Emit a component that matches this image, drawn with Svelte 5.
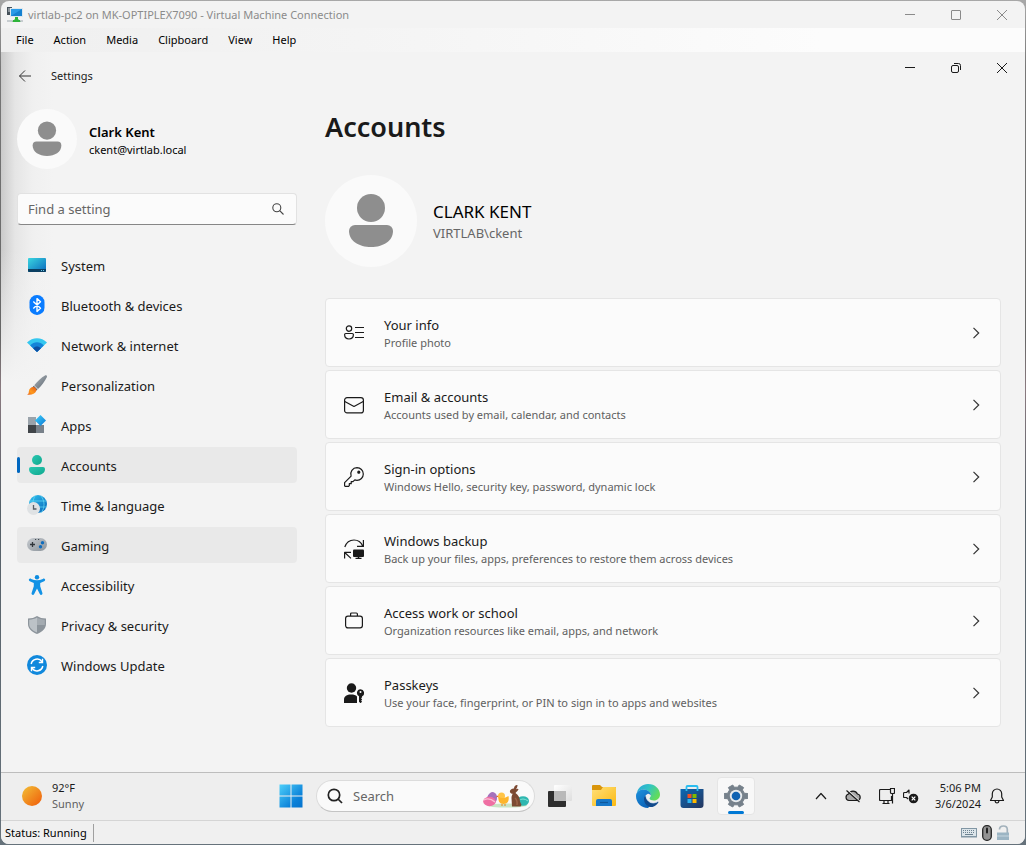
<script>
  const nav = [
    { icon: 'system', label: 'System' },
    { icon: 'bluetooth', label: 'Bluetooth & devices' },
    { icon: 'network', label: 'Network & internet' },
    { icon: 'brush', label: 'Personalization' },
    { icon: 'apps', label: 'Apps' },
    { icon: 'accounts', label: 'Accounts', current: true },
    { icon: 'time', label: 'Time & language' },
    { icon: 'gaming', label: 'Gaming', hovered: true },
    { icon: 'accessibility', label: 'Accessibility' },
    { icon: 'shield', label: 'Privacy & security' },
    { icon: 'update', label: 'Windows Update' }
  ];

  const cards = [
    { icon: 'info', title: 'Your info', text: 'Profile photo' },
    { icon: 'mail', title: 'Email & accounts', text: 'Accounts used by email, calendar, and contacts' },
    { icon: 'key', title: 'Sign-in options', text: 'Windows Hello, security key, password, dynamic lock' },
    { icon: 'backup', title: 'Windows backup', text: 'Back up your files, apps, preferences to restore them across devices' },
    { icon: 'work', title: 'Access work or school', text: 'Organization resources like email, apps, and network' },
    { icon: 'passkey', title: 'Passkeys', text: 'Use your face, fingerprint, or PIN to sign in to apps and websites' }
  ];

  const menus = ['File', 'Action', 'Media', 'Clipboard', 'View', 'Help'];
  let query = $state('');
  let taskQuery = $state('');
</script>

{#snippet navIcon(name)}
  <svg class="i20" viewBox="0 0 20 20" aria-hidden="true">
    {#if name === 'system'}
      <defs>
        <linearGradient id="sys" x1="0" y1="0" x2="1" y2="1"><stop offset="0" stop-color="#3ad6e0" /><stop offset="1" stop-color="#0a68bd" /></linearGradient>
      </defs>
      <rect x="1" y="3" width="18" height="14" rx="1" fill="url(#sys)" />
      <path d="M1 14h18v2a1 1 0 0 1-1 1H2a1 1 0 0 1-1-1z" fill="#0b3f62" />
      <path d="M14 15h1v1h-1zM16 15h1v1h-1z" fill="#6cc8ec" />
    {:else if name === 'bluetooth'}
      <rect x="2.5" y="0" width="15" height="20" rx="7.3" fill="#0a7cff" />
      <path d="M6.3 6.6l7.2 6.6L10 16.4V3.6l3.5 3.2-7.2 6.6" fill="none" stroke="#fff" stroke-width="1.4" stroke-linejoin="round" />
    {:else if name === 'network'}
      <path d="M0 7.6C5.5 1.8 14.500 1.800 20 7.600L10 17z" fill="#35c7ef" />
      <path d="M3.200 10.600C7.200 6.200 12.800 6.200 16.800 10.600L10 17z" fill="#1583d8" />
      <path d="M6.200 13.400C8.400 11 11.600 11 13.800 13.400L10 17z" fill="#0d4fa3" />
    {:else if name === 'brush'}
      <defs>
        <linearGradient id="br" x1="0" y1="0" x2="1" y2="1"><stop offset="0" stop-color="#b0b7bd" /><stop offset="1" stop-color="#5b656f" /></linearGradient>
        <linearGradient id="bt" x1="1" y1="0" x2="0" y2="1"><stop offset="0" stop-color="#e2591b" /><stop offset=".6" stop-color="#ff9a1c" /><stop offset="1" stop-color="#e8601b" /></linearGradient>
      </defs>
      <path d="M18 .4c1.200-.7 2.500.5 1.800 1.800-1.900 4-5.400 8.800-8.800 11.800L7.200 10.300C10.300 6.500 14.400 2.400 18 .4z" fill="url(#br)" />
      <path d="M6.800 10.800l3.700 3.700-1.200 1-3.600-3.600z" fill="#59616a" />
      <path d="M5.600 12c2.300-.5 4.400 1.600 3.700 3.700C8.300 19 3.800 20.200 0 19.400c2-.7 1.600-1.800 1.900-3.500.3-1.900 1.700-3.500 3.700-3.900z" fill="url(#bt)" />
    {:else if name === 'apps'}
      <defs>
        <linearGradient id="ap" x1="0" y1="0" x2="1" y2="1"><stop offset="0" stop-color="#3ed0fa" /><stop offset="1" stop-color="#0a78d4" /></linearGradient>
      </defs>
      <rect x="1" y="2" width="8" height="8" fill="#9aa3ab" />
      <rect x="1" y="10" width="8" height="8" fill="#404549" />
      <rect x="9" y="10" width="8" height="8" fill="#78818a" />
      <path d="M13.500 0L19 5.500 13.500 11 8 5.500z" fill="url(#ap)" />
    {:else if name === 'accounts'}
      <defs>
        <linearGradient id="ac" x1="0" y1="0" x2="1" y2="1"><stop offset="0" stop-color="#2bc8b2" /><stop offset="1" stop-color="#0fa88e" /></linearGradient>
      </defs>
      <circle cx="10" cy="5" r="5" fill="url(#ac)" />
      <path d="M4 12h12a2 2 0 0 1 2 2c0 4-3.600 6-8 6s-8-2-8-6a2 2 0 0 1 2-2z" fill="url(#ac)" />
    {:else if name === 'time'}
      <defs>
        <linearGradient id="gl" x1="0" y1="0" x2="1" y2="1"><stop offset="0" stop-color="#31c3ef" /><stop offset="1" stop-color="#0865b8" /></linearGradient>
      </defs>
      <circle cx="11" cy="9" r="9" fill="url(#gl)" />
      <path d="M2.500 6h17M3 12h17M8 1C5 6 5 12 9 18M14 1c4 5 4 12 0 17" fill="none" stroke="#6adff8" stroke-width=".9" opacity=".75" />
      <circle cx="6.500" cy="13.500" r="6.500" fill="#dfe2e4" />
      <path d="M6.500 10v4h3" fill="none" stroke="#555d65" stroke-width="1.300" />
    {:else if name === 'gaming'}
      <defs>
        <linearGradient id="ga" x1="0" y1="0" x2="1" y2="1"><stop offset="0" stop-color="#c6cacf" /><stop offset="1" stop-color="#8c949b" /></linearGradient>
      </defs>
      <rect x="0" y="3" width="20" height="13" rx="6.500" fill="url(#ga)" />
      <path d="M5.500 7v5M3 9.500h5" stroke="#30363b" stroke-width="1.300" />
      <circle cx="15.500" cy="7.700" r="1.700" fill="#0f6cbd" /><circle cx="13.500" cy="11.700" r="1.700" fill="#0f6cbd" />
      <path d="M8 4.500h1.200M11 4.500h1.200" stroke="#444b51" stroke-width="1" />
    {:else if name === 'accessibility'}
      <circle cx="10" cy="2.200" r="2.200" fill="#0d8ce0" />
      <path d="M2 4.300c.5-1 1.500-.8 2.200-.4 3.800 1.700 7.800 1.700 11.600 0 .7-.4 1.700-.6 2.200.4.400 1-.2 1.600-.8 1.900L13.200 8v3.200l2.200 6.900c.5 1.900-1.900 2.600-2.600.9L10 13.500 7.200 19c-.7 1.700-3.100 1-2.600-.9l2.200-6.900V8L2.800 6.200C2.200 5.900 1.600 5.300 2 4.300z" fill="#1292e5" />
    {:else if name === 'shield'}
      <path d="M10 1c2.500 1.700 5.500 2.500 9 2.500V9c0 4.700-4 8-9 10-5-2-9-5.300-9-10V3.500C4.500 3.500 7.500 2.700 10 1z" fill="#8c949b" />
      <path d="M10 2.500V17.500C5.600 15.600 2.200 12.900 2.200 9V4.700C5 4.600 7.700 4 10 2.500z" fill="#bcc2c7" />
      <path d="M10 2.500c2.300 1.500 5 2.100 7.800 2.200V10H10z" fill="#a4abb1" />
    {:else}
      <circle cx="10" cy="10" r="10" fill="#1088dc" />
      <path d="M4.200 9A6 6 0 0 1 15 6.700M15.800 11A6 6 0 0 1 5 13.300" fill="none" stroke="#fff" stroke-width="1.500" />
      <path d="M15.500 3.800v3.700h-3.700M4.500 16.200v-3.700h3.700" fill="none" stroke="#fff" stroke-width="1.400" />
    {/if}
  </svg>
{/snippet}

{#snippet cardIcon(name)}
  <svg class="i20 line" viewBox="0 0 20 20" aria-hidden="true">
    {#if name === 'info'}
      <circle cx="5" cy="5.600" r="2.700" />
      <path d="M1.800 10.500h6.400c.8 0 1.200.5 1.200 1.100 0 2.700-1.700 4.400-4.400 4.400S.6 14.300.6 11.600c0-.6.400-1.100 1.200-1.100zM11 4.500h9M11 9.500h9M11 14.500h9" />
    {:else if name === 'mail'}
      <rect x=".6" y="2.600" width="18.800" height="15.300" rx="2.500" />
      <path d="M.8 6.500L10 11.500l9.200-5" />
    {:else if name === 'key'}
      <path d="M13 .7a6.300 6.300 0 0 1 0 12.600c-.8 0-1.500-.1-2.200-.4L9 14.700H7.200v2H5.300v2l-.7.700H1.200l-.6-.6v-3.200l6.500-6.500A6.300 6.300 0 0 1 13 .7z" />
      <circle cx="14.800" cy="5.200" r="1" fill="#1a1a1a" />
    {:else if name === 'backup'}
      <path d="M.8 8C2.500 3 6 1 10 1c4 0 7 2 8.700 6M19.400 1v6.400H13M.6 19.500V13.400H7M1 13.800l6 5.600" />
      <rect x="9" y="10.500" width="11" height="7.500" rx="1" fill="#1a1a1a" stroke="none" />
      <path d="M14.500 18v2M11.500 19.500h6" stroke-width="1.500" />
    {:else if name === 'work'}
      <rect x="1.600" y="5.100" width="16.800" height="11.800" rx="2.300" />
      <path d="M6.600 5V3a1 1 0 0 1 1-1h4.800a1 1 0 0 1 1 1v2" />
    {:else}
      <g fill="#1a1a1a" stroke="none">
        <circle cx="7.500" cy="5" r="4.700" />
        <path d="M0 20v-3.500C0 13 3 11.500 7 11.500c3 0 4.600.6 6 2V20z" />
        <path fill-rule="evenodd" d="M16.500 6.200a3.700 3.700 0 0 1 1.600 7v1.100l-1 1 1 1.200-1 1.200 1 1-1.600 1.500-1.500-1.500v-5.500a3.700 3.700 0 0 1 1.500-7zm0 1.700a1 1 0 1 0 0 2 1 1 0 0 0 0-2z" />
      </g>
    {/if}
  </svg>
{/snippet}

{#snippet person()}
  <svg viewBox="0 0 92 92" aria-hidden="true">
    <circle cx="46" cy="33" r="14" fill="#8e8e8e" />
    <path d="M30 50h32a6 6 0 0 1 6 6c0 10-10 16-22 16s-22-6-22-16a6 6 0 0 1 6-6z" fill="#8e8e8e" />
  </svg>
{/snippet}

{#snippet windowButtons(restored)}
  <div class="controls" class:inner={restored}>
    <button aria-label="Minimize"><svg viewBox="0 0 12 12"><path d="M1 5.500h10" /></svg></button>
    <button aria-label={restored ? 'Restore' : 'Maximize'}>
      <svg viewBox="0 0 12 12">
        {#if restored}
          <rect x="1.500" y="3.500" width="7" height="7" rx="1.500" /><path d="M4 1.500h4.500a2 2 0 0 1 2 2V8" />
        {:else}
          <rect x="1.500" y="1.500" width="9" height="9" rx=".5" />
        {/if}
      </svg>
    </button>
    <button aria-label="Close"><svg viewBox="0 0 12 12"><path d="M1 1l10 10M11 1L1 11" /></svg></button>
  </div>
{/snippet}

<div class="desktop">
  <div class="vm">
    <header class="titlebar">
      <svg class="vmicon" viewBox="0 0 16 16" aria-hidden="true">
        <rect x="0" y="0" width="5" height="8" fill="#46515a" /><path d="M1 2h2M1 4h2" stroke="#cfd6da" />
        <rect x="3" y="1" width="13" height="9" fill="#dce7ee" /><rect x="4" y="2" width="11" height="7" fill="#2a9be8" /><path d="M4 9l11-7v7z" fill="#1681d0" />
        <path d="M8 10h3v2l3 3h-9l3-3z" fill="#2eb43a" /><path d="M0 14h16" stroke="#9ba6ad" /><path d="M6 14h7" stroke="#2eb43a" stroke-width="2" />
      </svg>
      <span>virtlab-pc2 on MK-OPTIPLEX7090 - Virtual Machine Connection</span>
      {@render windowButtons(false)}
    </header>

    <nav class="menubar" aria-label="Menu">
      {#each menus as m}<button>{m}</button>{/each}
    </nav>

    <div class="settings">
      <div class="appbar">
        <button class="back" aria-label="Back">
          <svg viewBox="0 0 14 14"><path d="M13 7H1.500M7 1.500L1.500 7 7 12.500" /></svg>
        </button>
        <span>Settings</span>
        {@render windowButtons(true)}
      </div>

      <div class="columns">
        <aside>
          <div class="user">
            <div class="avatar small">{@render person()}</div>
            <div class="who">
              <strong>Clark Kent</strong>
              <span>ckent@virtlab.local</span>
            </div>
          </div>
          <label class="find">
            <input type="text" placeholder="Find a setting" aria-label="Find a setting" bind:value={query} />
            <svg viewBox="0 0 12 12" aria-hidden="true"><circle cx="4.800" cy="4.800" r="4" /><path d="M7.700 7.700L11.500 11.500" /></svg>
          </label>
          <nav class="list" aria-label="Settings">
            {#each nav as item}
              <a href="#{item.icon}" class:current={item.current} class:hovered={item.hovered} aria-current={item.current ? 'page' : undefined}>
                {@render navIcon(item.icon)}<span>{item.label}</span>
              </a>
            {/each}
          </nav>
        </aside>

        <main>
          <h1>Accounts</h1>
          <div class="profile">
            <div class="avatar">{@render person()}</div>
            <div>
              <h2>CLARK KENT</h2>
              <p>VIRTLAB\ckent</p>
            </div>
          </div>
          <div class="cards">
            {#each cards as card}
              <button class="card">
                {@render cardIcon(card.icon)}
                <span class="words">
                  <span class="title">{card.title}</span>
                  <span class="text">{card.text}</span>
                </span>
                <svg class="chev" viewBox="0 0 12 12" aria-hidden="true"><path d="M3.500 .8L8.700 6 3.500 11.200" /></svg>
              </button>
            {/each}
          </div>
        </main>
      </div>
    </div>

    <div class="taskbar">
      <button class="weather">
        <svg viewBox="0 0 20 20" aria-hidden="true">
          <defs><linearGradient id="sun" x1="0" y1="0" x2="1" y2="1"><stop offset="0" stop-color="#f2c037" /><stop offset="1" stop-color="#f05a09" /></linearGradient></defs>
          <circle cx="10" cy="10" r="10" fill="url(#sun)" />
        </svg>
        <span><span>92°F</span><span class="muted">Sunny</span></span>
      </button>

      <div class="pins">
        <button aria-label="Start">
          <svg viewBox="0 0 24 24">
            <defs><linearGradient id="win" x1="0" y1="0" x2="24" y2="24" gradientUnits="userSpaceOnUse"><stop offset="0" stop-color="#50d2fb" /><stop offset=".7" stop-color="#0a80d8" /><stop offset="1" stop-color="#0471cc" /></linearGradient></defs>
            <path d="M.5 .5H11.500V11.500H.5zM12.500 .5h11v11h-11zM.5 12.500h11v11H.5zM12.500 12.500h11v11h-11z" fill="url(#win)" />
          </svg>
        </button>
        <label class="tasksearch">
          <svg class="mag" viewBox="0 0 16 16" aria-hidden="true"><circle cx="7" cy="7" r="5.700" /><path d="M11 11l4 4" /></svg>
          <input type="text" placeholder="Search" aria-label="Search" bind:value={taskQuery} />
          <svg class="easter" viewBox="0 0 46 24" aria-hidden="true">
            <ellipse cx="24" cy="21.500" rx="20" ry="2" fill="#c9e3c4" />
            <ellipse cx="9" cy="14.500" rx="5" ry="6.500" fill="#a672bc" transform="rotate(15 9 14.500)" />
            <ellipse cx="6.500" cy="17.500" rx="6.300" ry="4.700" fill="#ef6fa3" /><path d="M1 16q5-3 11 2" stroke="#f9c0d6" fill="none" stroke-width="1.400" />
            <circle cx="18.500" cy="12" r="3.500" fill="#ffc447" /><path d="M15.500 13c3 2 7 1 10-1 1 5-1 8-5 8s-5.500-3-5-7z" fill="#fdb52c" /><path d="M15 11.500l-2 1 2.200.7z" fill="#ed6a18" /><path d="M19 20v2M22 20v2" stroke="#e6821c" />
            <ellipse cx="40" cy="17" rx="6" ry="4.800" fill="#2fb7b0" /><path d="M35 17q5-4 10 0" stroke="#7fe0d4" fill="none" />
            <path d="M27 8c-.5-2 2-3.500 4-3.500C31 2 33 .5 34.500 1c0 1.500-.5 3-1.500 4.200 1-.7 2.300-.8 2.500 0-.5 1.500-2 2.300-3 3.800 3 2 4.500 5 4.500 8.500l1.500 3.500-1 1.500H29l-.5-8.500c0-2 .8-3.300 1.200-4.200C28.500 9.800 27.200 9.200 27 8z" fill="#7c4a33" />
            <path d="M32 14c2 2 2.500 4 2 7" stroke="#9b6347" fill="none" stroke-width="1.500" />
          </svg>
        </label>
        <button aria-label="Task view">
          <svg viewBox="0 0 24 24">
            <defs><linearGradient id="tv" x1="0" y1="0" x2="1" y2="1"><stop offset="0" stop-color="#ffffff" /><stop offset="1" stop-color="#dedede" /></linearGradient></defs>
            <rect x="0" y="7" width="18" height="16" rx="1" fill="#2e2e2e" /><rect x="6" y="1" width="18" height="16" rx="1" fill="url(#tv)" /><rect x="6" y="7" width="12" height="10" fill="#b9b9b9" />
          </svg>
        </button>
        <button aria-label="File Explorer">
          <svg viewBox="0 0 24 24">
            <defs><linearGradient id="fe" x1="0" y1="0" x2="1" y2="1"><stop offset="0" stop-color="#ffe07a" /><stop offset="1" stop-color="#fbb912" /></linearGradient></defs>
            <path d="M0 2a1 1 0 0 1 1-1h7l2 2h13a1 1 0 0 1 1 1v6H0z" fill="#d9950b" /><path d="M0 6h9l2-3h12a1 1 0 0 1 1 1v17a1 1 0 0 1-1 1H1a1 1 0 0 1-1-1z" fill="url(#fe)" />
            <path d="M4 22v-5a2 2 0 0 1 2-2h12a2 2 0 0 1 2 2v5z" fill="#1677c9" /><path d="M8 18.500h8" stroke="#0d579c" stroke-width="1.200" />
          </svg>
        </button>
        <button aria-label="Microsoft Edge">
          <svg viewBox="0 0 24 24">
            <defs>
              <linearGradient id="e1" x1="0" y1="0" x2="1" y2=".5"><stop offset="0" stop-color="#2aa4dc" /><stop offset=".5" stop-color="#31c4c4" /><stop offset="1" stop-color="#62dc5a" /></linearGradient>
              <linearGradient id="e2" x1="0" y1="0" x2=".6" y2="1"><stop offset="0" stop-color="#1d92dd" /><stop offset="1" stop-color="#0b63b8" /></linearGradient>
            </defs>
            <path d="M.8 9C2 3.600 6.500 0 12 0c7 0 12 5 12 10.500 0 3.500-2.700 6-6 6-2.500 0-4.500-.8-4.500-2 0-.7 1.300-1.300 1.300-3C14.800 8 11 5.500 7.500 5.500 4.600 5.500 2 7 .8 9z" fill="url(#e1)" />
            <path d="M0 12c0-4 3.500-6.500 7.500-6.500 4 0 7.300 2.500 7.300 5.800-1-1.300-2.200-1.800-3.300-1.300-4.500 2-3.500 9.500 2 12.500l-1.500 1.500C5 24 0 18.500 0 12z" fill="url(#e2)" />
            <path d="M8 14c-.4 5 3.300 9.800 8.500 9 2.500-.6 4.500-2.300 5.800-4.500.4-.8-.2-1-.8-.7-5 2.500-10.800.7-11.500-6-1 .5-1.800 1.200-2 2.200z" fill="#114a8b" />
            <path d="M10 11.800c.7 6.700 6.500 8.500 11.500 6" fill="none" stroke="#eef4f8" stroke-width=".8" />
          </svg>
        </button>
        <button aria-label="Microsoft Store">
          <svg viewBox="0 0 24 24">
            <defs><linearGradient id="ms" x1="0" y1="0" x2="1" y2="1"><stop offset="0" stop-color="#0c69b5" /><stop offset="1" stop-color="#25355d" /></linearGradient></defs>
            <path d="M6.500 7V3a1 1 0 0 1 1-1h9a1 1 0 0 1 1 1v4" fill="none" stroke="#2bbdf0" stroke-width="1.800" /><path d="M.5 5h23v16a3 3 0 0 1-3 3h-17a3 3 0 0 1-3-3z" fill="url(#ms)" /><path d="M6.500 5v2M17.500 5v2" stroke="#2bbdf0" stroke-width="1.800" />
            <path d="M7.500 10h4v4h-4z" fill="#f25022" /><path d="M12.500 10h4v4h-4z" fill="#7fba00" /><path d="M7.500 15h4v4h-4z" fill="#2ab3f2" /><path d="M12.500 15h4v4h-4z" fill="#ffb900" />
          </svg>
        </button>
        <button class="active" aria-label="Settings">
          <svg viewBox="0 0 24 24">
            <path d="M8.800 1l1.200 2.200h4L15.200 1l4.400 2.500-1.200 2.400 2 3.400L23.800 9.500v5l-3.400.2-2 3.400 1.200 2.400-4.400 2.500L14 20.800h-4L8.800 23l-4.400-2.500 1.200-2.400-2-3.400L.2 14.500v-5l3.400-.2 2-3.400-1.200-2.400z" fill="#76818b" stroke="#76818b" stroke-linejoin="round" />
            <circle cx="12" cy="12" r="6.200" fill="#e7eaec" /><circle cx="12" cy="12" r="4.300" fill="#0f62b2" />
          </svg>
        </button>
      </div>

      <div class="tray">
        <button class="wide" aria-label="Show hidden icons"><svg class="t12 line" viewBox="0 0 12 12"><path d="M1 9l5-5.500L11 9" /></svg></button>
        <button class="wide" aria-label="OneDrive">
          <svg class="t16 line" viewBox="0 0 16 16"><path d="M4 12.500a3.300 3.300 0 0 1-.4-6.500 4.800 4.800 0 0 1 8.800 0 3.300 3.300 0 0 1 .1 6.500z" fill="#a9a9a9" /><path d="M2.500 2l13 12" stroke="#eee" /><path d="M1.500 2.500l13 11.500" /></svg>
        </button>
        <button aria-label="Network">
          <svg class="t16 line" viewBox="0 0 16 16"><path d="M11 1.500H1.500a1 1 0 0 0-1 1v9a1 1 0 0 0 1 1h11V8M5 12.500v3M9 12.500v3M3.500 15.500h7M11.500 .5h4v4a1 1 0 0 1-1 1h-2a1 1 0 0 1-1-1zM13.500 5.500v10" /></svg>
        </button>
        <button aria-label="Volume muted">
          <svg class="t16 line" viewBox="0 0 16 16"><path d="M6 5.500V2L3.500 4.500h-2a1 1 0 0 0-1 1v3a1 1 0 0 0 1 1h2L5 11" /><circle cx="10.500" cy="10.500" r="4.200" fill="#1a1a1a" /><path d="M8.700 8.700l3.600 3.600M12.300 8.700l-3.600 3.600" stroke="#fff" /></svg>
        </button>
        <button class="clock"><span>5:06 PM</span><span>3/6/2024</span></button>
        <button aria-label="Notifications">
          <svg class="t16 line" viewBox="0 0 16 16"><path d="M8 1a4.700 4.700 0 0 0-4.700 4.700V9L1.500 12.500h13L12.700 9V5.700A4.700 4.700 0 0 0 8 1zM6 13c.3 1.300 1 2 2 2s1.700-.7 2-2" /></svg>
        </button>
      </div>
    </div>

    <footer class="status">
      <span>Status: Running</span>
      <div class="devices">
        <svg class="kb" viewBox="0 0 16 12" aria-hidden="true"><rect x="0" y="1" width="16" height="9.500" fill="#8196a4" /><rect x="1" y="2" width="14" height="7" fill="#dce5ea" /><path d="M2 3.500h12M2 5.500h12" stroke="#6d8290" stroke-dasharray="1 1" /><path d="M4 7.500h8" stroke="#6d8290" /></svg>
        <svg class="ms" viewBox="0 0 10 16" aria-hidden="true"><rect x=".7" y=".7" width="8.600" height="14.600" rx="4" fill="#929292" stroke="#272727" stroke-width="1.300" /><rect x="4" y="2.500" width="2" height="6" rx="1" fill="#222" /></svg>
        <svg class="lk" viewBox="0 0 12 16" aria-hidden="true"><path d="M2.500 4.500C2.500 2 4.500 1 6.500 1c2.300 0 3.800 1.500 3.800 3.600V8" fill="none" stroke="#a3b2bc" stroke-width="1.700" /><rect x="0" y="7.500" width="12" height="7.500" fill="#9cb5c4" /><path d="M0 11h12" stroke="#c6d6df" /></svg>
      </div>
    </footer>
  </div>
</div>

<style>
  :global(body) { margin: 0; background: #8d9296; }
  .desktop {
    box-sizing: border-box; min-height: 100vh; padding: 1px; display: flex;
    background: linear-gradient(#a8a8a8, #777 8%, #666 40%, #8a7a80 46%, #566068 60%, #66727b);
    font-family: "Segoe UI", "Noto Sans", "Open Sans", sans-serif; font-size: 13px; line-height: 18px; color: #1a1a1a;
  }
  .vm { flex: 1; display: flex; flex-direction: column; background: #f3f3f3; border-radius: 8px; overflow: hidden; }
  button { font: inherit; color: inherit; background: none; border: 0; padding: 0; margin: 0; text-align: left; }
  svg { display: block; flex: none; }
  input { font: inherit; color: #1a1a1a; border: 0; background: none; outline: 0; padding: 0; min-width: 0; flex: 1; }
  input::placeholder { color: #666; opacity: 1; }
  .i20 { width: 20px; height: 20px; }
  .line { fill: none; stroke: #1a1a1a; stroke-width: 1.2; stroke-linejoin: round; }

  .titlebar { display: flex; align-items: center; height: 27px; padding-left: 6px; gap: 5px; font-size: 11px; color: #8b8b8b; }
  .vmicon { width: 16px; height: 16px; }
  .controls { display: flex; margin-left: auto; }
  .controls button { width: 46px; display: flex; justify-content: center; }
  .controls svg { width: 12px; height: 12px; fill: none; stroke: #8a8a8a; }
  .controls.inner { margin-bottom: 16px; }
  .controls.inner svg { stroke: #1a1a1a; }

  .menubar { display: flex; gap: 20px; align-items: center; height: 24px; padding: 0 15px; font-size: 11px; color: #000; background: linear-gradient(90deg, #efefef, #f4f4f4 35%, #fcfcfc 80%); }

  .settings {
    flex: 1; background:
      linear-gradient(#f3f3f300 45%, #f3f3f3 75%) 0 0 / 60px 440px no-repeat,
      linear-gradient(90deg, #cacaca, #e5e5e5 14px, #f0f0f0 32px, #f3f3f3 52px) 0 0 / 60px 440px no-repeat, #f3f3f3;
  }
  .appbar { display: flex; align-items: center; height: 48px; padding-left: 17px; font-size: 11px; }
  .back { margin-right: 19px; }
  .back svg { width: 14px; height: 14px; fill: none; stroke: #333; }
  .columns { display: grid; grid-template-columns: 280px minmax(0, 1fr); gap: 28px; padding: 0 24px 45px 16px; }

  .user { display: flex; align-items: center; gap: 12px; margin-top: 9px; }
  .avatar { width: 92px; height: 92px; border-radius: 50%; background: #fafafa; flex: none; }
  .avatar svg { width: 100%; height: 100%; }
  .avatar.small { width: 60px; height: 60px; }
  .who { padding-top: 3px; }
  .user strong, .user span { display: block; color: #000; }
  .user strong { font-size: 13px; font-weight: 600; }
  .user span { font-size: 11px; }

  .find { box-sizing: border-box; height: 32px; margin: 24px 0 22px; padding: 0 12px 0 10px; display: flex; align-items: center; background: #fbfbfb; border: 1px solid #e2e2e2; border-bottom-color: #868686; border-radius: 4px; }
  .find svg { width: 12px; height: 12px; fill: none; stroke: #444; stroke-width: 1.1; }
  .list { display: grid; gap: 4px; }
  .list a { height: 36px; padding: 0 10px; display: flex; align-items: center; gap: 14px; color: inherit; text-decoration: none; border-radius: 4px; position: relative; }
  .list span { padding-top: 2px; }
  .list a.current, .list a.hovered { background: #e9e9e9; }
  .list a.current::before { content: ''; position: absolute; left: 0; top: 10px; width: 3px; height: 16px; border-radius: 2px; background: #0067c0; }

  h1 { margin: 9px 0 0; font-size: 27px; line-height: 36px; font-weight: 600; }
  .profile { display: flex; align-items: center; gap: 16px; margin: 30px 0 31px; }
  h2 { margin: 0; font-size: 17px; line-height: 24px; font-weight: 400; color: #000; }
  .profile p { margin: 0; color: #666; }
  .cards { display: grid; gap: 3px; }
  .card { box-sizing: border-box; width: 100%; min-height: 69px; padding: 0 18px; display: flex; align-items: center; gap: 20px; background: #fbfbfb; border: 1px solid #e5e5e5; border-radius: 4px; }
  .words { flex: 1; padding-top: 2px; }
  .title, .text { display: block; }
  .text { font-size: 11px; color: #606060; }
  .chev { width: 12px; height: 12px; fill: none; stroke: #333; stroke-width: 1.2; }

  .taskbar { box-sizing: border-box; display: grid; grid-template-columns: 1fr auto 1fr; align-items: center; height: 49px; padding: 0 20px 2px 21px; background: #eee; border-top: 1px solid #bdbdbd; border-bottom: 1px solid #d5d5d5; font-size: 11px; line-height: 16px; }
  .weather { display: flex; align-items: center; gap: 10px; }
  .weather svg { width: 20px; height: 20px; }
  .weather span span, .clock span { display: block; }
  .muted { color: #606060; }
  .pins { display: flex; align-items: center; gap: 6px; }
  .pins button { box-sizing: border-box; width: 38px; height: 38px; display: grid; place-items: center; border: 1px solid transparent; border-radius: 4px; }
  .pins button svg { width: 24px; height: 24px; }
  .pins .active { position: relative; background: #f8f8f8; border-color: #e5e5e5; }
  .active::after { content: ''; position: absolute; left: 10px; bottom: 0; width: 16px; height: 3px; border-radius: 2px; background: #0078d4; }
  .tasksearch { box-sizing: border-box; width: 219px; height: 32px; padding: 0 5px 0 10px; display: flex; align-items: center; gap: 10px; font-size: 13px; background: #fafafa; border: 1px solid #dcdcdc; border-bottom-color: #c4c4c4; border-radius: 16px; }
  .mag { width: 16px; height: 16px; fill: none; stroke: #222; stroke-width: 1.7; }
  .easter { width: 46px; height: 24px; }
  .tray { display: flex; align-items: center; justify-content: flex-end; gap: 8px; }
  .wide { margin-right: 10px; }
  .t12 { width: 12px; height: 12px; }
  .t16 { width: 16px; height: 16px; }
  .clock { text-align: right; margin-left: 8px; }

  .status { display: flex; align-items: center; justify-content: space-between; height: 23px; padding: 0 16px 0 4px; font-size: 11px; color: #000; background: #f0f0f0; }
  .status > span { padding-right: 6px; border-right: 1px solid #a0a0a0; }
  .devices { display: flex; align-items: center; gap: 5px; }
  .kb { width: 16px; height: 12px; }
  .ms { width: 10px; height: 16px; }
  .lk { width: 12px; height: 16px; }
</style>
